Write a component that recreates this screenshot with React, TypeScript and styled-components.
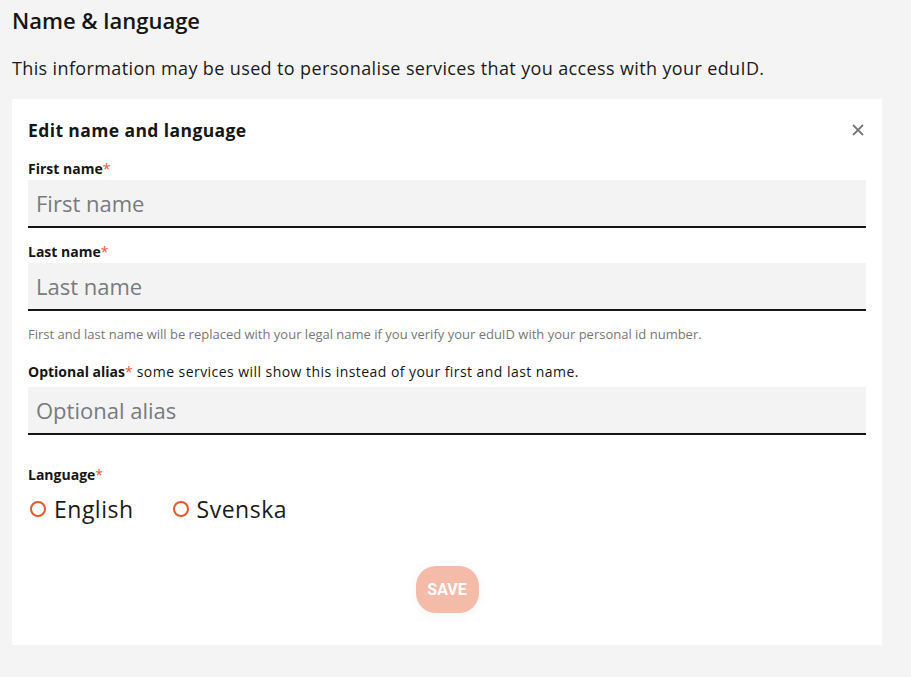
import React from "react";
import styled, { createGlobalStyle } from "styled-components";

const Global = createGlobalStyle`
  html, body { margin: 0; padding: 0; background: #f4f4f4; }
  body { font-family: "Open Sans", Lato, sans-serif; color: #1a1a1a; }
  * { box-sizing: border-box; }
`;

const Page = styled.div`
  padding: 4px 29px 31px 12px;
  display: flex;
  flex-direction: column;
`;

const Title = styled.h1`
  margin: 0;
  font-size: 22px;
  font-weight: 600;
  line-height: 32px;
  color: #161616;
`;

const Lead = styled.p`
  margin: 16px 0 0;
  font-size: 18px;
  letter-spacing: 0.37px;
  line-height: 32px;
  color: #1b1b1b;
`;

const Card = styled.section`
  margin-top: 15px;
  background: #fff;
  padding: 16px 16px 32px;
  display: flex;
  flex-direction: column;
`;

const CardHead = styled.div`
  display: flex;
  align-items: center;
  justify-content: space-between;
  height: 30px;
`;

const CardTitle = styled.h2`
  margin: 0;
  font-size: 17.5px;
  letter-spacing: 0.4px;
  font-weight: 700;
  color: #161616;
`;

const Close = styled.button`
  border: none;
  background: none;
  padding: 0;
  width: 16px;
  height: 16px;
  display: flex;
  align-items: center;
  justify-content: center;
  cursor: pointer;
`;

const Field = styled.div<{ $gap?: number }>`
  display: flex;
  flex-direction: column;
  margin-top: ${(p) => p.$gap ?? 0}px;
`;

const Label = styled.label<{ $after?: number }>`
  font-size: 14px;
  font-weight: 700;
  line-height: 22px;
  color: #161616;
  margin-bottom: ${(p) => p.$after ?? 0}px;
`;

const LabelNote = styled.span`
  font-weight: 400;
  letter-spacing: 0.45px;
  margin-left: 4px;
`;

const Star = styled.span`
  color: #e5573c;
  font-weight: 400;
`;

const Input = styled.input`
  height: 48px;
  border: none;
  border-bottom: 2px solid #161616;
  background: #f3f3f3;
  padding: 0 8px;
  font-family: inherit;
  font-size: 22px;
  color: #1a1a1a;
  outline: none;
  &::placeholder { color: #777b80; }
`;

const Help = styled.p`
  margin: 14px 0 0;
  font-size: 13px;
  line-height: 18px;
  color: #777;
`;

const Radios = styled.div`
  display: flex;
  gap: 39px;
  margin-top: 10px;
  padding-left: 2px;
`;

const RadioLabel = styled.label`
  display: flex;
  align-items: center;
  gap: 8px;
  font-size: 23px;
  letter-spacing: 0.5px;
  color: #1a1a1a;
  line-height: 26px;
`;

const RadioDot = styled.span`
  width: 16px;
  height: 16px;
  border-radius: 50%;
  border: 2px solid #e6572e;
  background: #fff;
`;

const Actions = styled.div`
  display: flex;
  justify-content: center;
  margin-top: 44px;
`;

const Save = styled.button`
  width: 63px;
  height: 47px;
  padding: 0;
  border: none;
  border-radius: 20px;
  background: #f4bba8;
  color: #fff;
  font-family: Roboto, sans-serif;
  font-weight: 700;
  font-size: 16px;
  box-shadow: 0 2px 12px rgba(0, 0, 0, 0.05);
`;

export default function App() {
  return (
    <>
      <Global />
      <Page>
        <Title>Name &amp; language</Title>
        <Lead>This information may be used to personalise services that you access with your eduID.</Lead>
        <Card>
          <CardHead>
            <CardTitle>Edit name and language</CardTitle>
            <Close aria-label="close">
              <svg width="12" height="12" viewBox="0 0 12 12">
                <path d="M1 1L11 11M11 1L1 11" stroke="#777" strokeWidth="1.8" />
              </svg>
            </Close>
          </CardHead>
          <Field $gap={13}>
            <Label>First name<Star>*</Star></Label>
            <Input placeholder="First name" />
          </Field>
          <Field $gap={13}>
            <Label>Last name<Star>*</Star></Label>
            <Input placeholder="Last name" />
          </Field>
          <Help>First and last name will be replaced with your legal name if you verify your eduID with your personal id number.</Help>
          <Field $gap={18}>
            <Label $after={4}>Optional alias<Star>*</Star><LabelNote>some services will show this instead of your first and last name.</LabelNote></Label>
            <Input placeholder="Optional alias" />
          </Field>
          <Field $gap={29}>
            <Label>Language<Star>*</Star></Label>
            <Radios>
              <RadioLabel><RadioDot />English</RadioLabel>
              <RadioLabel><RadioDot />Svenska</RadioLabel>
            </Radios>
          </Field>
          <Actions>
            <Save disabled>SAVE</Save>
          </Actions>
        </Card>
      </Page>
    </>
  );
}
